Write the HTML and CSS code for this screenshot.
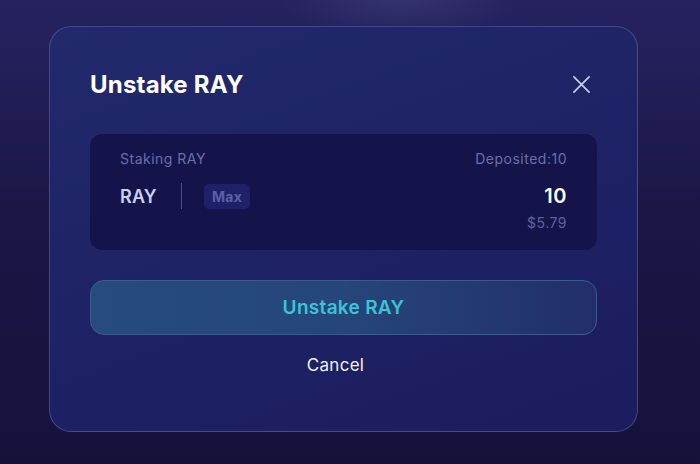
FILE: index.html
```html
<!DOCTYPE html>
<html>
<head>
<meta charset="utf-8">
<link rel="stylesheet" href="styles.css">
</head>
<body>
<div class="page">
  <div class="modal">
    <div class="head">
      <h1 class="title">Unstake RAY</h1>
      <svg class="close" width="20" height="20" viewBox="0 0 20 20"><path d="M2 2L18 18M18 2L2 18" stroke="#c5cdf5" stroke-width="1.8" stroke-linecap="round" fill="none"/></svg>
    </div>
    <div class="card">
      <div class="row top">
        <span class="label">Staking RAY</span>
        <span class="label">Deposited:10</span>
      </div>
      <div class="row mid">
        <div class="token">
          <span class="sym">RAY</span>
          <span class="div"></span>
          <span class="max">Max</span>
        </div>
        <span class="amount">10</span>
      </div>
      <div class="row bottom">
        <span></span>
        <span class="usd">$5.79</span>
      </div>
    </div>
    <button class="primary">Unstake RAY</button>
    <div class="cancel">Cancel</div>
  </div>
</div>
</body>
</html>
```
FILE: styles.css
```css
* { box-sizing: border-box; }
html, body { margin: 0; padding: 0; }
body {
  width: 700px; height: 464px; overflow: hidden;
  font-family: Inter, "Open Sans", sans-serif;
  background: linear-gradient(180deg, #262260 0%, #231f5a 12%, #1a1747 45%, #15123a 100%);
}
.page {
  height: 464px;
  padding: 26px 62px 0 49px;
  background: radial-gradient(ellipse 120px 40px at 400px 0px, rgba(80,80,140,0.35), transparent);
}
.modal {
  width: 589px; height: 406px;
  border-radius: 22px;
  border: 1px solid rgba(110,120,200,0.45);
  background: linear-gradient(160deg, #22296c 0%, #1e2466 40%, #1c1c5e 100%);
  padding: 41px 40px 0 40px;
  display: flex; flex-direction: column;
}
.head { display: flex; justify-content: space-between; align-items: center; height: 32px; padding-right: 6px; }
.title { margin: 0; font-size: 24px; font-weight: 700; color: #ffffff; letter-spacing: 0.2px; }
.close { width: 19px; height: 19px; }
.card {
  margin-top: 34px;
  height: 116px;
  border-radius: 12px;
  background: #15144a;
  padding: 16px 30px 0 30px;
}
.row { display: flex; justify-content: space-between; align-items: center; }
.label { font-size: 14px; color: #6b6fa8; letter-spacing: 0.5px; }
.mid { margin-top: 16px; height: 26px; }
.token { display: flex; align-items: center; }
.sym { font-size: 18px; font-weight: 600; color: #c9d0f2; letter-spacing: 0.2px; }
.div { width: 1px; height: 26px; background: #4a4c85; margin: 0 22px 0 24px; }
.max { font-size: 14px; font-weight: 700; color: #5b60a6; background: #1f2068; border-radius: 5px; padding: 4px 8px; letter-spacing: 0.3px; }
.amount { font-size: 20px; font-weight: 600; color: #ffffff; letter-spacing: 0.5px; }
.bottom { margin-top: 5px; }
.usd { font-size: 14px; color: #5e639f; letter-spacing: 0.5px; }
.primary {
  margin-top: 30px;
  height: 55px; width: 100%;
  border-radius: 14px;
  border: 1px solid #3d5b92;
  background: linear-gradient(90deg, #274b7d 0%, #254679 50%, #222e6b 100%);
  color: #3bc3d6; font-family: Inter, sans-serif;
  font-size: 19px; font-weight: 600; letter-spacing: 0.3px;
}
.cancel { text-align: center; margin-top: 20px; font-size: 17px; color: #f2f2ff; padding-right: 16px; letter-spacing: 0.3px; }
```
